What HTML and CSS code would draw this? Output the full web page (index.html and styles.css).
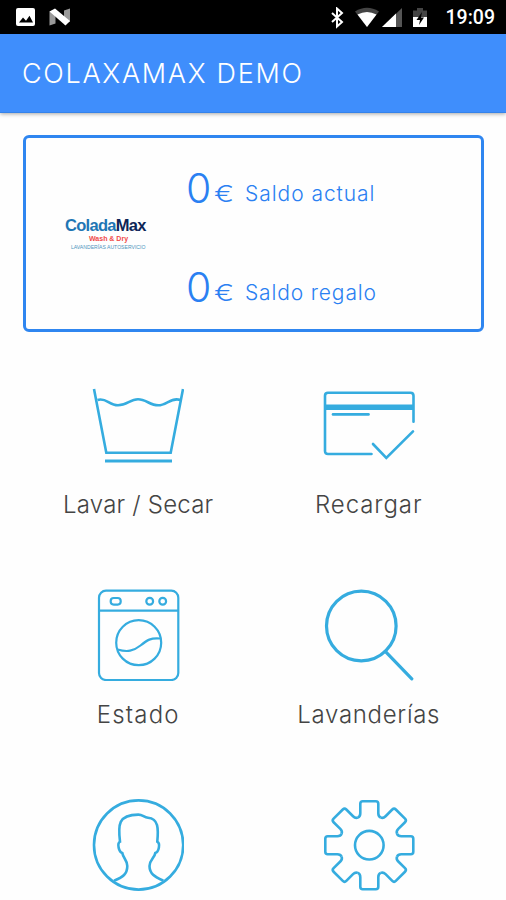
FILE: index.html
```html
<!DOCTYPE html>
<html lang="es">

    <head>
        <meta charset="UTF-8">
        <meta name="viewport" content="width=device-width, initial-scale=1.0">
        <title>Colaxamax Demo</title>
        <link rel="stylesheet" href="styles.css">
    </head>

    <body>

        <!-- Barra de estado -->
        <div class="status-bar">
            <svg class="status-left" width="56" height="20" viewBox="0 0 56 20">
                <rect x="0" y="1" width="19" height="18" rx="2" fill="#fff"/>
                <path d="M3 15.500l4-5 3 3.200 3.500-5 3.500 6.800z" fill="#000"/>
                <path d="M33.500 4.500l6-2v14l-6 2zM48 3.500l6-2v13l-6 3z" fill="#999"/>
                <path d="M33.500 4.500l5.500-3L54 14l-4.500 4.500z" fill="#fff"/>
            </svg>
            <div class="status-right">
                <svg width="98" height="22" viewBox="0 0 98 22">
                    <path d="M2 6l10 9-5 4.500V1.500L12 6 2 15" fill="none" stroke="#fff" stroke-width="2"/>
                    <path d="M25 4.500q12-7.500 24 0L37 20z" fill="#444"/>
                    <path d="M27.500 7.500q9.500-5 19 0L37 20z" fill="#fff"/>
                    <path d="M72 1v19H52z" fill="#555"/>
                    <path d="M66 6.500V20H52z" fill="#fff"/>
                    <path d="M83 3.500h4V1h6v2.500h4V10H83z" fill="#444"/>
                    <path d="M83 10h14v10H83z" fill="#fff"/>
                    <path d="M92 5l-5.500 8h3.500l-1 5 5-7.500h-3z" fill="#000"/>
                </svg>
                <span class="clock">19:09</span>
            </div>
        </div>

        <header class="app-bar">
            <h1>COLAXAMAX DEMO</h1>
        </header>

        <main>

            <!-- Saldo -->
            <section class="card">
                <div class="logo">
                    <div class="logo-name">Colada<span>Max</span></div>
                    <div class="logo-sub">Wash &amp; Dry</div>
                    <div class="logo-tag">LAVANDERÍAS AUTOSERVICIO</div>
                </div>
                <div class="balances">
                    <p class="balance"><span class="amount">0</span><span class="euro">€</span><span class="actual">Saldo actual</span></p>
                    <p class="balance"><span class="amount">0</span><span class="euro">€</span><span class="regalo">Saldo regalo</span></p>
                </div>
            </section>

            <!-- Menú -->
            <nav class="menu">
                <a class="item" href="#">
                    <svg class="icon" viewBox="0 0 92 92">
                        <path d="M2 10l12.300 63.700h64.400L91 10"/>
                        <path d="M5.500 21C14 18 17 26.300 26 26.300S38 20.300 46 20.300 58 26.300 66.300 26.300 79 18 88.500 21"/>
                        <path d="M13 82h67" stroke-width="3"/>
                    </svg>
                    <span class="label lavar">Lavar / Secar</span>
                </a>
                <a class="item" href="#">
                    <svg class="icon" viewBox="0 0 92 92">
                        <path d="M48.500 75H5q-3 0-3-3V16.700q0-3 3-3h82.500q3 0 3 3v26" stroke-linecap="round"/>
                        <path d="M2 28.300h88.500" stroke-width="5.500"/>
                        <path d="M10 35.400h35.500" stroke-linecap="round"/>
                        <path d="M50 65l13.300 14L90 52.300" stroke-linecap="round"/>
                    </svg>
                    <span class="label recargar">Recargar</span>
                </a>
                <a class="item" href="#">
                    <svg class="icon thin" viewBox="0 0 92 92">
                        <rect x="7" y="1.700" width="79.300" height="89.300" rx="7"/>
                        <path d="M7 21.700h79.300"/>
                        <rect x="18.700" y="9" width="10" height="6.600" rx="3"/>
                        <circle cx="57.700" cy="12.300" r="3.400"/>
                        <circle cx="70.700" cy="12.300" r="3.400"/>
                        <circle cx="46.700" cy="53.700" r="22.500"/>
                        <path d="M25.500 60.500c10 3 16 1.500 23-4s10-7.800 19.500-7"/>
                    </svg>
                    <span class="label estado">Estado</span>
                </a>
                <a class="item" href="#">
                    <svg class="icon lens" viewBox="0 0 92 92">
                        <circle cx="38.300" cy="37" r="34.800"/>
                        <path d="M62.300 62.300l26.500 27.500" stroke-linecap="round"/>
                    </svg>
                    <span class="label lavanderias">Lavanderías</span>
                </a>
                <a class="item" href="#">
                    <svg class="icon" viewBox="0 0 92 92">
                        <circle cx="46.600" cy="46" r="44.600"/>
                        <path d="M22 81.700C31 78 35.300 75 35.300 67c0-6-4-7.500-5-13-3.500-1-5.500-9.500-2.300-11.300C26 26 26 15.600 46.300 15.600c4.500 0 5.700 3 9.700 3.100 10.500.8 10.500 11 9.300 24 3.400 2 1.400 10.500-2 11.300-.7 5-5.800 7-5.800 13 0 8 5.300 10.500 13.800 14.700"/>
                    </svg>
                </a>
                <a class="item" href="#">
                    <svg class="icon" viewBox="0 0 92 92">
                        <defs>
                            <path id="tooth" d="M-11.500-27.700Q-9-28.700-9-32v-9.500Q-9-44-6.500-44h13Q9-44 9-41.500v9.500q0 3.300 2.500 4.300"/>
                        </defs>
                        <g transform="translate(46.300 46.200)">
                            <circle r="14.300"/>
                            <use href="#tooth"/>
                            <use href="#tooth" transform="rotate(45)"/>
                            <use href="#tooth" transform="rotate(90)"/>
                            <use href="#tooth" transform="rotate(135)"/>
                            <use href="#tooth" transform="rotate(180)"/>
                            <use href="#tooth" transform="rotate(225)"/>
                            <use href="#tooth" transform="rotate(270)"/>
                            <use href="#tooth" transform="rotate(315)"/>
                        </g>
                    </svg>
                </a>
            </nav>

        </main>

    </body>

</html>
```
FILE: styles.css
```css
/* General */
* { box-sizing: border-box; }
body
{
    margin: 0;
    background-color: #fefefe;
    font-family: Inter, "Open Sans", sans-serif;
    font-weight: 300;
}
svg { display: block; }

/* Barra de estado */
.status-bar
{
    display: flex;
    justify-content: space-between;
    height: 34px;
    padding: 7px 11px 0 16px;
    background-color: #000;
}
.status-right { display: flex; gap: 18px; }
.clock
{
    font-family: Roboto, sans-serif;
    font-size: 19.500px;
    font-weight: 500;
    line-height: 22px;
    color: #fff;
}

/* Cabecera */
.app-bar
{
    display: flex;
    align-items: center;
    height: 79px;
    padding-left: 22px;
    background-color: #3f8efc;
    border-bottom: 1px solid #3583ea;
    box-shadow: 0 1px 4px rgba(0, 0, 0, 0.35);
}
.app-bar h1
{
    margin: 0;
    font-size: 27px;
    font-weight: 300;
    letter-spacing: 1.700px;
    color: #fff;
}

main { padding: 22px 22px 0 23px; }

/* Saldo */
.card
{
    display: flex;
    height: 197px;
    border: 3px solid #2f86f0;
    border-radius: 6px;
    color: #2a80f2;
}
.logo
{
    width: 160px;
    padding: 77px 0 0 39px;
    font-family: "Liberation Sans", Arial, sans-serif;
}
.logo-name
{
    font-size: 16.500px;
    font-weight: 700;
    line-height: 20px;
    letter-spacing: -0.700px;
    color: #1f76b4;
}
.logo-name span { color: #0d2557; }
.logo-sub { padding-left: 24px; font-size: 7px; font-weight: 700; line-height: 8px; color: #f04a4a; }
.logo-tag { padding-left: 6px; font-size: 5.100px; line-height: 8px; color: #4d94bd; white-space: nowrap; }

.balances { padding-top: 25px; }
.balance
{
    display: flex;
    align-items: baseline;
    height: 98.500px;
    margin: 0;
    line-height: 50px;
    white-space: nowrap;
}
.amount { width: 28px; font-size: 41px; }
.euro { width: 31px; font-size: 23px; transform: translateY(-1px) scaleX(1.300); transform-origin: left; }
.actual, .regalo
{
    padding-bottom: 2px;
    font-size: 21px;
    letter-spacing: 0.950px;
    transform: translateY(-2px);
}
.regalo { letter-spacing: 0.850px; }

/* Menú */
.menu
{
    display: grid;
    grid-template-columns: 1fr 1fr;
    grid-template-rows: 210px 210px 92px;
    padding-top: 47px;
}
.item
{
    display: flex;
    flex-direction: column;
    align-items: center;
    color: #444;
    text-decoration: none;
}
.icon
{
    width: 92px;
    height: 92px;
    fill: none;
    stroke: #35acdf;
    stroke-width: 2.600;
}
.thin { stroke-width: 2.200; }
.lens { stroke-width: 3.200; }

.label { margin-top: 19px; font-size: 24px; line-height: 30px; white-space: nowrap; }
.lavar { letter-spacing: 0.200px; }
.recargar { letter-spacing: 0.900px; }
.estado { letter-spacing: 1.200px; }
.lavanderias { letter-spacing: 0.700px; }
```
